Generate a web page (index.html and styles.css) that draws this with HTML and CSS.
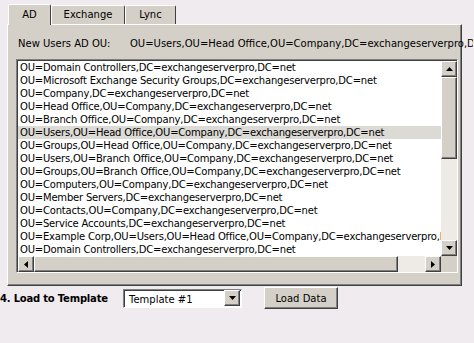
FILE: index.html
```html
<!DOCTYPE html>
<html lang="en">
<head>
  <meta charset="UTF-8" />
  <title>Directory Import</title>
  <link rel="stylesheet" href="styles.css">
</head>
<body>
  <div class="tabs">
    <div class="tab active tab-ad">AD</div>
    <div class="tab tab-exchange">Exchange</div>
    <div class="tab tab-lync">Lync</div>
  </div>
  <div class="panel">
    <div class="ou-row">
      <span class="ou-label">New Users AD OU:</span>
      <span class="ou-value">OU=Users,OU=Head Office,OU=Company,DC=exchangeserverpro,DC=</span>
    </div>
    <div class="listbox">
      <div class="list-view">
        <ul class="items">
          <li>OU=Domain Controllers,DC=exchangeserverpro,DC=net</li>
          <li>OU=Microsoft Exchange Security Groups,DC=exchangeserverpro,DC=net</li>
          <li>OU=Company,DC=exchangeserverpro,DC=net</li>
          <li>OU=Head Office,OU=Company,DC=exchangeserverpro,DC=net</li>
          <li>OU=Branch Office,OU=Company,DC=exchangeserverpro,DC=net</li>
          <li class="selected">OU=Users,OU=Head Office,OU=Company,DC=exchangeserverpro,DC=net</li>
          <li>OU=Groups,OU=Head Office,OU=Company,DC=exchangeserverpro,DC=net</li>
          <li>OU=Users,OU=Branch Office,OU=Company,DC=exchangeserverpro,DC=net</li>
          <li>OU=Groups,OU=Branch Office,OU=Company,DC=exchangeserverpro,DC=net</li>
          <li>OU=Computers,OU=Company,DC=exchangeserverpro,DC=net</li>
          <li>OU=Member Servers,DC=exchangeserverpro,DC=net</li>
          <li>OU=Contacts,OU=Company,DC=exchangeserverpro,DC=net</li>
          <li>OU=Service Accounts,DC=exchangeserverpro,DC=net</li>
          <li>OU=Example Corp,OU=Users,OU=Head Office,OU=Company,DC=exchangeserverpro,D</li>
          <li>OU=Domain Controllers,DC=exchangeserverpro,DC=net</li>
        </ul>
        <div class="vscroll">
          <div class="sb-btn"><svg width="7" height="4" viewBox="0 0 7 4"><path d="M3.5 0L7 4H0z" fill="#000"/></svg></div>
          <div class="sb-track">
            <div class="sb-thumb v-thumb"></div>
          </div>
          <div class="sb-btn"><svg width="7" height="4" viewBox="0 0 7 4"><path d="M0 0H7L3.5 4z" fill="#000"/></svg></div>
        </div>
      </div>
      <div class="hscroll-row">
        <div class="hscroll">
          <div class="sb-btn"><svg width="4" height="7" viewBox="0 0 4 7"><path d="M4 0V7L0 3.5z" fill="#000"/></svg></div>
          <div class="sb-track h-track">
            <div class="sb-thumb h-thumb"></div>
          </div>
          <div class="sb-btn"><svg width="4" height="7" viewBox="0 0 4 7"><path d="M0 0L4 3.5L0 7z" fill="#000"/></svg></div>
        </div>
        <div class="corner"></div>
      </div>
    </div>
  </div>
  <div class="load-row">
    <span class="load-label">4. Load to Template</span>
    <div class="combo">
      <span class="combo-text">Template #1</span>
      <div class="sb-btn combo-btn"><svg width="7" height="4" viewBox="0 0 7 4"><path d="M0 0H7L3.5 4z" fill="#000"/></svg></div>
    </div>
    <button class="btn">Load Data</button>
  </div>
</body>
</html>
```

FILE: styles.css
```css
body {
  margin: 0;
  background: #efebef;
  color: #000;
  font-family: 'DejaVu Sans', sans-serif;
  font-size: 10px;
  overflow: hidden;
}

.tabs {
  display: flex;
  padding: 4px 0 0 8px;
  height: 20px;
  align-items: flex-end;
}

.tab {
  height: 19px;
  line-height: 18px;
  text-align: center;
  background: #d4d0c8;
  border-top: 1px solid #fff;
  border-left: 1px solid #fff;
  border-right: 1px solid #404040;
  border-top-left-radius: 2px;
  border-top-right-radius: 2px;
  box-sizing: border-box;
}

.tab-ad { width: 43px; }
.tab-exchange { width: 74px; }
.tab-lync { width: 51px; }

.tab.active {
  height: 21px;
  line-height: 20px;
  position: relative;
  z-index: 1;
  margin-bottom: -1px;
}

.panel {
  margin: 0 12px 0 7px;
  height: 262px;
  background: #d4d0c8;
  border-top: 1px solid #fff;
  border-left: 1px solid #fff;
  border-right: 1px solid #404040;
  border-bottom: 1px solid #404040;
  box-shadow: inset -1px -1px 0 #808080;
  box-sizing: border-box;
  padding: 12px 4px 0 8px;
}

.ou-row {
  display: flex;
  white-space: nowrap;
  overflow: hidden;
  height: 13px;
  line-height: 13px;
  margin-right: -16px;
}

.ou-label {
  width: 112px;
  padding-left: 2px;
  flex-shrink: 0;
}

.listbox {
  margin-top: 9px;
  width: 442px;
  border-top: 1px solid #808080;
  border-left: 1px solid #808080;
  border-right: 1px solid #fff;
  border-bottom: 1px solid #fff;
  box-sizing: border-box;
}

.list-view {
  display: flex;
  border-top: 1px solid #404040;
  border-left: 1px solid #404040;
  background: #fff;
}

.items {
  list-style: none;
  margin: 0;
  padding: 0;
  flex: 1;
  overflow: hidden;
  white-space: nowrap;
  letter-spacing: -0.2px;
}

.items li {
  height: 13px;
  line-height: 13px;
  padding-left: 2px;
}

.items li.selected {
  background: #dcdad5;
}

.vscroll {
  width: 16px;
  display: flex;
  flex-direction: column;
  flex-shrink: 0;
}

.sb-btn {
  width: 16px;
  height: 16px;
  background: #d4d0c8;
  border-top: 1px solid #fff;
  border-left: 1px solid #fff;
  border-right: 1px solid #404040;
  border-bottom: 1px solid #404040;
  box-shadow: inset -1px -1px 0 #808080;
  box-sizing: border-box;
  display: flex;
  align-items: center;
  justify-content: center;
  flex-shrink: 0;
}

.sb-track {
  flex: 1;
  background: #eeebe6;
  display: flex;
  flex-direction: column;
}

.sb-thumb {
  background: #d4d0c8;
  border-top: 1px solid #fff;
  border-left: 1px solid #fff;
  border-right: 1px solid #404040;
  border-bottom: 1px solid #404040;
  box-shadow: inset -1px -1px 0 #808080;
  box-sizing: border-box;
}

.v-thumb {
  height: 82px;
}

.hscroll-row {
  display: flex;
  border-left: 1px solid #404040;
  background: #fff;
}

.hscroll {
  flex: 1;
  display: flex;
  height: 16px;
}

.h-track {
  flex-direction: row;
}

.h-thumb {
  width: 364px;
  height: 16px;
}

.corner {
  width: 16px;
  height: 16px;
  background: #d4d0c8;
}

.load-row {
  display: flex;
  align-items: center;
  margin-top: 1px;
  height: 22px;
}

.load-label {
  font-weight: bold;
  width: 123px;
  flex-shrink: 0;
  letter-spacing: -0.2px;
}

.combo {
  width: 119px;
  height: 19px;
  background: #fff;
  border-top: 1px solid #808080;
  border-left: 1px solid #808080;
  border-right: 1px solid #fff;
  border-bottom: 1px solid #fff;
  box-shadow: inset 1px 1px 0 #404040;
  box-sizing: border-box;
  display: flex;
  align-items: center;
  padding: 1px 1px 0 5px;
}

.combo-text {
  flex: 1;
  padding-top: 1px;
}

.combo-btn {
  height: 16px;
  margin-top: -1px;
}

.btn {
  margin-left: 22px;
  width: 74px;
  height: 22px;
  font-family: inherit;
  font-size: 10px;
  color: #000;
  background: #d4d0c8;
  border-top: 1px solid #fff;
  border-left: 1px solid #fff;
  border-right: 1px solid #404040;
  border-bottom: 1px solid #404040;
  box-shadow: inset -1px -1px 0 #808080;
  padding: 0;
}
```
